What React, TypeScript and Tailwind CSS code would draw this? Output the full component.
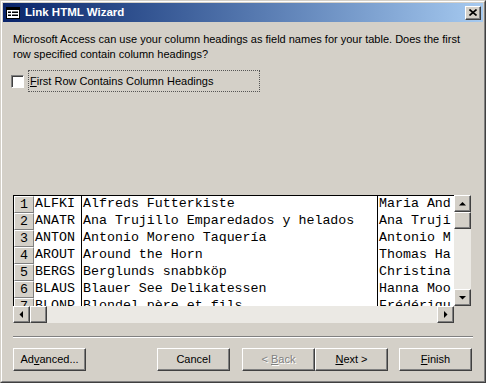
import React from "react";

const rows = [
  ["ALFKI", "Alfreds Futterkiste", "Maria And"],
  ["ANATR", "Ana Trujillo Emparedados y helados", "Ana Truji"],
  ["ANTON", "Antonio Moreno Taquería", "Antonio M"],
  ["AROUT", "Around the Horn", "Thomas Ha"],
  ["BERGS", "Berglunds snabbköp", "Christina"],
  ["BLAUS", "Blauer See Delikatessen", "Hanna Moo"],
  ["BLONP", "Blondel père et fils", "Frédériqu"],
];

const ui = "font-['Tahoma','Liberation_Sans',sans-serif] text-[11px]";
const mono = "font-['Courier_New','Liberation_Mono',monospace] text-[13.3px]";

// raised 3D box like win2k buttons
const raised =
  "border border-t-white border-l-white border-r-[#404040] border-b-[#404040] shadow-[inset_-1px_-1px_0_#808080]";

function Arrow({ dir }: { dir: "up" | "down" | "left" | "right" }) {
  const pts = {
    up: "3.5,1 0,4.5 7,4.5",
    down: "0,1 7,1 3.5,4.5",
    left: "4,0 4,7 0.5,3.5",
    right: "1,0 1,7 4.5,3.5",
  }[dir];
  const vertical = dir === "up" || dir === "down";
  return (
    <svg width={vertical ? 7 : 5} height={vertical ? 5 : 7} viewBox={vertical ? "0 0 7 5" : "0 0 5 7"}>
      <polygon points={pts} fill="#000" />
    </svg>
  );
}

function ScrollBtn({ dir }: { dir: "up" | "down" | "left" | "right" }) {
  return (
    <div className={`w-[17px] h-[17px] bg-[#d4d0c8] flex items-center justify-center shrink-0 ${raised}`}>
      <Arrow dir={dir} />
    </div>
  );
}

function Button({ children, disabled }: { children: React.ReactNode; disabled?: boolean }) {
  return (
    <div
      className={`w-[73px] h-[23px] bg-[#d4d0c8] flex items-center justify-center whitespace-pre ${raised} ${
        disabled ? "text-[#808080] [text-shadow:1px_1px_0_#fff]" : "text-black"
      }`}
    >
      {children}
    </div>
  );
}

export default function App() {
  return (
    <div
      className={`w-[486px] h-[383px] bg-[#d4d0c8] border border-t-[#d4d0c8] border-l-[#d4d0c8] border-r-[#404040] border-b-[#404040] ${ui}`}
    >
      <div className="h-full border border-t-white border-l-white border-r-[#808080] border-b-[#808080] p-[1px] flex flex-col">
        {/* Title bar */}
        <div className="h-[19px] shrink-0 bg-gradient-to-r from-[#0a246a] to-[#a6caf0] flex items-center pl-[3px] pr-[2px]">
          <svg width="14" height="12" viewBox="0 0 14 12" className="mr-[5px]">
            <rect x="0.5" y="0.5" width="13" height="11" fill="#fff" stroke="#000" />
            <rect x="1" y="1" width="12" height="2" fill="#000" />
            <rect x="2" y="4.5" width="3" height="1.5" fill="#000" />
            <rect x="6" y="4.5" width="6" height="1.5" fill="#000" />
            <rect x="2" y="7.5" width="3" height="1.5" fill="#000" />
            <rect x="6" y="7.5" width="6" height="1.5" fill="#000" />
          </svg>
          <span className="text-white font-bold text-[11.5px] flex-1">Link HTML Wizard</span>
          <div className={`w-[16px] h-[14px] bg-[#d4d0c8] flex items-center justify-center ${raised}`}>
            <svg width="8" height="7" viewBox="0 0 8 7">
              <path d="M0.5 0.5 L7.5 6.5 M7.5 0.5 L0.5 6.5" stroke="#000" strokeWidth="1.6" />
            </svg>
          </div>
        </div>

        {/* Body */}
        <div className="flex-1 flex flex-col px-[10px]">
          <p className="mt-[10px] leading-[15px] whitespace-nowrap">
            Microsoft Access can use your column headings as field names for your table. Does the first
            <br />
            row specified contain column headings?
          </p>

          <div className="mt-[8px] flex items-center">
            <div className="w-[13px] h-[13px] bg-white border border-t-[#808080] border-l-[#808080] border-r-white border-b-white shadow-[inset_1px_1px_0_#404040] ml-[-2px]" />
            <div className="ml-[4px] w-[232px] h-[22px] border border-dotted border-[#555] flex items-center pl-[1px]">
              <span>
                <span className="underline">F</span>irst Row Contains Column Headings
              </span>
            </div>
          </div>

          {/* Grid */}
          <div className="mt-[103px] flex flex-col w-[458px]">
            <div className="flex">
              <div className="w-[441px] h-[111px] border-t border-l border-black bg-white overflow-hidden">
                {rows.map((r, i) => (
                  <div key={i} className={`flex h-[17px] ${mono} leading-[15px]`}>
                    <div className="w-[20px] shrink-0 bg-[#d4d0c8] border border-t-white border-l-white border-r-[#808080] border-b-[#808080] text-center text-black">
                      {i + 1}
                    </div>
                    <div className="w-[48px] shrink-0 border-r border-black pl-[1px] whitespace-nowrap overflow-hidden">
                      {r[0]}
                    </div>
                    <div className="w-[296px] shrink-0 border-r border-black pl-[1px] whitespace-nowrap overflow-hidden">
                      {r[1]}
                    </div>
                    <div className="flex-1 pl-[1px] whitespace-nowrap overflow-hidden">{r[2]}</div>
                  </div>
                ))}
              </div>
              <div className="w-[17px] h-[111px] flex flex-col bg-[#ebe9e4]">
                <ScrollBtn dir="up" />
                <div className={`w-[17px] h-[17px] bg-[#d4d0c8] ${raised}`} />
                <div className="flex-1" />
                <ScrollBtn dir="down" />
              </div>
            </div>
            <div className="flex">
              <div className="w-[441px] h-[17px] flex bg-[#ebe9e4]">
                <ScrollBtn dir="left" />
                <div className={`w-[17px] h-[17px] bg-[#d4d0c8] ${raised}`} />
                <div className="flex-1" />
                <ScrollBtn dir="right" />
              </div>
            </div>
          </div>

          {/* Separator */}
          <div className="mt-[13px] h-[2px] w-[460px] border-t border-t-[#808080] border-b border-b-white" />

          {/* Buttons */}
          <div className="mt-[10px] flex w-[460px]">
            <Button>
              Ad<span className="underline">v</span>anced...
            </Button>
            <div className="ml-[71px]">
              <Button>Cancel</Button>
            </div>
            <div className="ml-[12px]">
              <Button disabled>
                {"< "}
                <span className="underline">B</span>ack
              </Button>
            </div>
            <Button>
              <span className="underline">N</span>ext &gt;
            </Button>
            <div className="ml-[11px]">
              <Button>
                <span className="underline">F</span>inish
              </Button>
            </div>
          </div>
        </div>
      </div>
    </div>
  );
}
